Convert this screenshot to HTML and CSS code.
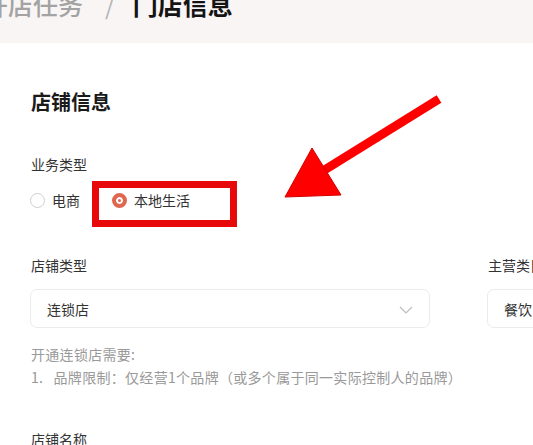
FILE: index.html
```html
<!DOCTYPE html>
<html lang="zh-CN">
<head>
<meta charset="utf-8">
<link rel="stylesheet" href="styles.css">
</head>
<body>
<header class="topbar">
  <div class="crumbs"><span class="crumb-prev">开店任务</span><span class="crumb-sep">/</span><span class="crumb-cur">门店信息</span></div>
</header>
<main class="page">
  <h2 class="title">店铺信息</h2>
  <div class="label">业务类型</div>
  <div class="radios">
    <label class="radio"><span class="dot"></span><span>电商</span></label>
    <label class="radio checked"><span class="dot"></span><span>本地生活</span></label>
  </div>
  <div class="fields">
    <div class="field field-left">
      <div class="label">店铺类型</div>
      <div class="select"><span>连锁店</span>
        <svg class="chev" width="14" height="8" viewBox="0 0 14 8"><path d="M1 1 L7 7 L13 1" fill="none" stroke="#bdbdbd" stroke-width="1.2"/></svg>
      </div>
      <div class="hint">开通连锁店需要:<br>1.&nbsp;&nbsp; 品牌限制：仅经营1个品牌（或多个属于同一实际控制人的品牌）</div>
    </div>
    <div class="field field-right">
      <div class="label">主营类目</div>
      <div class="select"><span>餐饮</span></div>
    </div>
  </div>
  <div class="label name-label">店铺名称</div>
</main>
<div class="mark-box"></div>
<svg class="arrow" width="533" height="445" viewBox="0 0 533 445">
  <line x1="439" y1="99" x2="318" y2="174" stroke="#f00" stroke-width="9" stroke-linecap="butt"/>
  <polygon points="285,197 312,148 341,195" fill="#f00" stroke="#d40000" stroke-width="1"/>
</svg>
</body>
</html>
```
FILE: styles.css
```css
* { box-sizing: border-box; }
html, body { margin: 0; padding: 0; background: #fff; }
body {
  width: 533px;
  height: 445px;
  overflow: hidden;
  position: relative;
  font-family: "Noto Sans CJK SC", "Noto Sans", sans-serif;
  color: #333;
}
.topbar {
  height: 43px;
  background: #f8f5f4;
  overflow: hidden;
}
.crumbs {
  margin-left: -17px;
  margin-top: -8px;
  font-size: 25px;
  line-height: 25px;
  white-space: nowrap;
  display: flex;
}
.crumb-prev { color: #a3a3a3; font-weight: 500; }
.crumb-sep { color: #b5b5b5; margin: 0 18px 0 22px; }
.crumb-cur { color: #141414; font-weight: 700; }

.page {
  padding-left: 30px;
  display: flex;
  flex-direction: column;
}
.title {
  margin: 48px 0 0 1px;
  font-size: 20px;
  line-height: 22px;
  font-weight: 700;
  color: #1a1a1a;
}
.label {
  font-size: 14px;
  line-height: 16px;
  color: #333;
  margin-left: 1px;
}
.page > .label:first-of-type { margin-top: 43px; }
.radios {
  margin-top: 18px;
  height: 20px;
  display: flex;
  align-items: center;
  gap: 32px;
}
.radio {
  display: flex;
  align-items: center;
  gap: 7px;
  font-size: 14px;
  line-height: 20px;
  color: #333;
}
.dot {
  width: 15px;
  height: 15px;
  border-radius: 50%;
  border: 1px solid #cfcfcf;
  background: #fff;
}
.checked .dot {
  border: 4px solid #e0674f;
  background: #e0674f;
  box-shadow: inset 0 0 0 2px #fff;
}
.fields {
  margin-top: 47px;
  display: flex;
  gap: 57px;
}
.field { display: flex; flex-direction: column; }
.field-left { width: 400px; flex-shrink: 0; }
.field-right { width: 200px; flex-shrink: 0; }
.select {
  margin-top: 16px;
  height: 39px;
  border: 1px solid #ebebeb;
  border-radius: 7px;
  display: flex;
  align-items: center;
  justify-content: space-between;
  padding: 0 16px 0 16px;
  font-size: 14px;
  color: #333;
}
.chev { margin-top: 2px; }
.hint {
  margin-top: 15px;
  margin-left: 1px;
  font-size: 14px;
  line-height: 23px;
  color: #999;
  white-space: nowrap;
  letter-spacing: 0.3px;
}
.name-label { margin-top: 42px; }

.mark-box {
  position: absolute;
  left: 92px;
  top: 181px;
  width: 145px;
  height: 46px;
  border: 7px solid #e80a0a;
}
.arrow {
  position: absolute;
  left: 0;
  top: 0;
  pointer-events: none;
}
```
